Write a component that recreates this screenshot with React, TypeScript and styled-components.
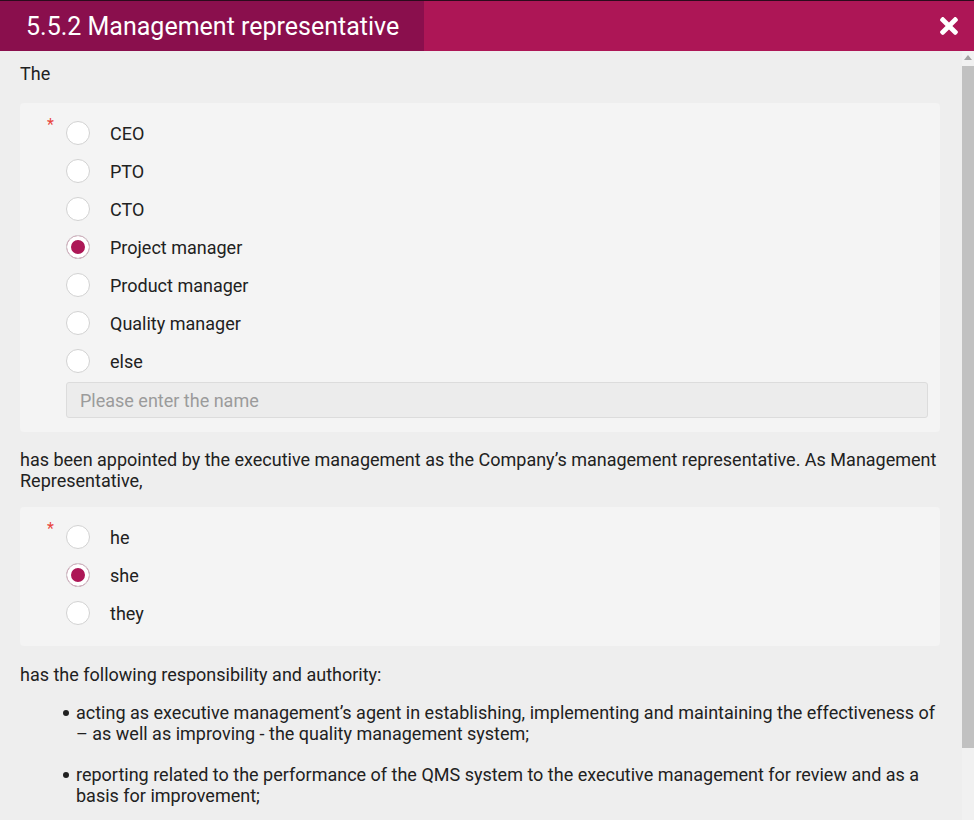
import React from "react";
import styled, { createGlobalStyle } from "styled-components";
import { FaTimes } from "react-icons/fa";

const GlobalStyle = createGlobalStyle`
  html, body {
    margin: 0;
    padding: 0;
    overflow: hidden;
    background: #2b0b1c;
    font-family: Roboto, "Liberation Sans", Arial, sans-serif;
  }
`;

const Modal = styled.div`
  margin-top: 1px;
  width: 974px;
  height: 819px;
  display: flex;
  flex-direction: column;
  background: #eeeeee;
`;

const Header = styled.div`
  height: 50px;
  flex: none;
  display: flex;
  align-items: stretch;
  background: #ad1656;
`;

const Title = styled.h1`
  margin: 0;
  padding: 0 25px 0 26px;
  display: flex;
  align-items: center;
  background: #8a0f4d;
  color: #ffffff;
  font-family: Roboto, "Liberation Sans", Arial, sans-serif;
  font-weight: 400;
  font-size: 25px;
`;

const HeaderSpacer = styled.div`
  flex: 1;
`;

const CloseButton = styled.button`
  width: 48px;
  border: none;
  background: transparent;
  color: #ffffff;
  display: flex;
  align-items: center;
  justify-content: center;
  padding: 0 2px 0 0;
  cursor: pointer;
`;

const Main = styled.div`
  flex: 1;
  min-height: 0;
  display: flex;
`;

const Scroll = styled.div`
  flex: 1;
  min-width: 0;
  overflow: hidden;
  background: #eeeeee;
`;

const Rail = styled.div`
  width: 12px;
  flex: none;
  display: flex;
  flex-direction: column;
  background: #f1f1f1;
`;

const RailArrow = styled.div`
  height: 15px;
  flex: none;
  display: flex;
  justify-content: center;
  align-items: flex-start;
  padding-top: 4px;
  box-sizing: border-box;
`;

const Thumb = styled.div`
  height: 682px;
  flex: none;
  background: #c1c1c1;
`;

const Body = styled.div`
  padding: 12px 22px 20px 20px;
  color: #212121;
  font-size: 18px;
  line-height: 21px;
`;

const Text = styled.p<{ $top?: number }>`
  margin: ${(p) => p.$top ?? 0}px 0 0 0;
`;

const Card = styled.div<{ $top: number }>`
  margin-top: ${(p) => p.$top}px;
  background: #f4f4f4;
  border-radius: 4px;
  padding: 11px 12px 14px 0;
  display: flex;
  align-items: flex-start;
`;

const Required = styled.span`
  width: 34px;
  flex: none;
  text-align: right;
  padding-right: 12px;
  margin-top: 3px;
  color: #e8453c;
  font-size: 16px;
  line-height: 16px;
`;

const Options = styled.div`
  flex: 1;
  display: flex;
  flex-direction: column;
`;

const OptionRow = styled.label`
  height: 38px;
  display: flex;
  align-items: center;
  gap: 20px;
  cursor: pointer;
`;

const Radio = styled.input.attrs({ type: "radio" })`
  appearance: none;
  margin: 0;
  width: 24px;
  height: 24px;
  flex: none;
  border-radius: 50%;
  border: 1px solid #d2d2d2;
  background: #ffffff;
  box-sizing: border-box;

  &:checked {
    background: #ad1656;
    box-shadow: inset 0 0 0 4px #ffffff;
  }
`;

const NameInput = styled.input`
  margin-top: 2px;
  height: 36px;
  box-sizing: border-box;
  border: 1px solid #dcdcdc;
  border-radius: 3px;
  background: #ececec;
  padding: 0 13px;
  font-family: Roboto, "Liberation Sans", Arial, sans-serif;
  font-size: 18px;
  color: #212121;
  outline: none;

  &::placeholder {
    color: #9b9b9b;
  }
`;

const List = styled.ul`
  list-style: none;
  margin: 0;
  padding: 0;
`;

const Item = styled.li<{ $top: number }>`
  margin-top: ${(p) => p.$top}px;
  display: flex;
  align-items: flex-start;
  padding-left: 43px;
`;

const Bullet = styled.span`
  width: 6px;
  height: 6px;
  margin: 8px 7px 0 0;
  flex: none;
  border-radius: 50%;
  background: #212121;
`;

const roles = ["CEO", "PTO", "CTO", "Project manager", "Product manager", "Quality manager", "else"];
const pronouns = ["he", "she", "they"];

const items = [
  "acting as executive management’s agent in establishing, implementing and maintaining the effectiveness of – as well as improving - the quality management system;",
  "reporting related to the performance of the QMS system to the executive management for review and as a basis for improvement;",
];

export default function App() {
  return (
    <>
      <GlobalStyle />
      <Modal>
        <Header>
          <Title>5.5.2 Management representative</Title>
          <HeaderSpacer />
          <CloseButton aria-label="Close">
            <FaTimes size={26} />
          </CloseButton>
        </Header>
        <Main>
          <Scroll>
            <Body>
              <Text>The</Text>
              <Card $top={19}>
                <Required>*</Required>
                <Options>
                  {roles.map((r) => (
                    <OptionRow key={r}>
                      <Radio name="role" defaultChecked={r === "Project manager"} />
                      {r}
                    </OptionRow>
                  ))}
                  <NameInput placeholder="Please enter the name" />
                </Options>
              </Card>
              <Text $top={17}>
                has been appointed by the executive management as the Company’s management representative. As
                Management Representative,
              </Text>
              <Card $top={16}>
                <Required>*</Required>
                <Options>
                  {pronouns.map((p) => (
                    <OptionRow key={p}>
                      <Radio name="pronoun" defaultChecked={p === "she"} />
                      {p}
                    </OptionRow>
                  ))}
                </Options>
              </Card>
              <Text $top={18}>has the following responsibility and authority:</Text>
              <List>
                {items.map((t, i) => (
                  <Item key={i} $top={i === 0 ? 17 : 20}>
                    <Bullet />
                    <span>{t}</span>
                  </Item>
                ))}
              </List>
            </Body>
          </Scroll>
          <Rail aria-hidden="true">
            <RailArrow>
              <svg width="8" height="5" viewBox="0 0 8 5">
                <path d="M0 5 L4 0 L8 5 Z" fill="#a3a3a3" />
              </svg>
            </RailArrow>
            <Thumb />
          </Rail>
        </Main>
      </Modal>
    </>
  );
}
